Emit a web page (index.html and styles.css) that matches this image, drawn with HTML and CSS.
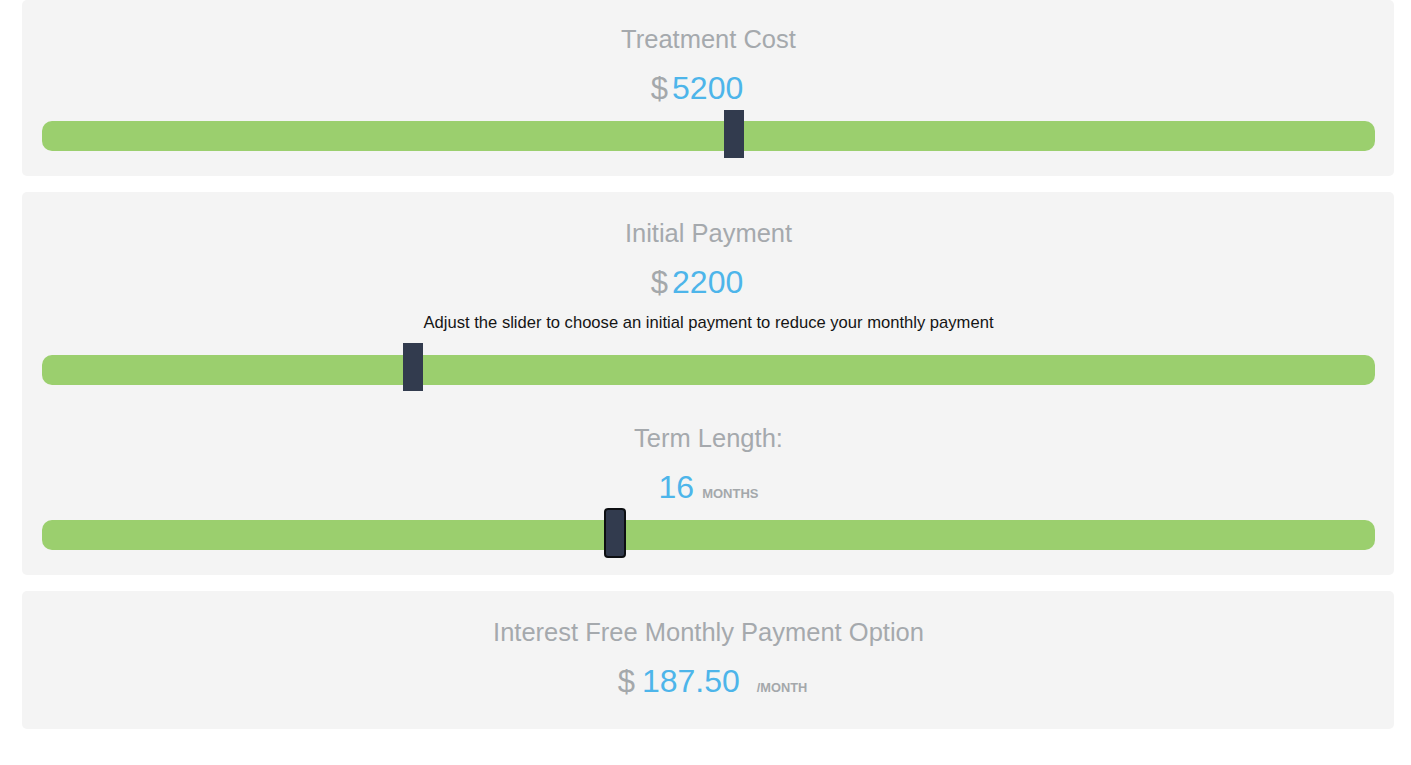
FILE: index.html
```html
<!DOCTYPE html>
<html>
<head>
<meta charset="utf-8">
<link rel="stylesheet" href="styles.css">
</head>
<body>
<div class="wrap">
  <section class="card card-first">
    <h2 class="title">Treatment Cost</h2>
    <div class="value value-dollar"><span class="cur">$</span><span class="num">5200</span></div>
    <div class="slider"><div class="thumb thumb-up" style="left: 51.2%"></div></div>
  </section>

  <section class="card">
    <h2 class="title">Initial Payment</h2>
    <div class="value value-dollar"><span class="cur">$</span><span class="num">2200</span></div>
    <p class="hint">Adjust the slider to choose an initial payment to reduce your monthly payment</p>
    <div class="slider slider-hint"><div class="thumb" style="left: 27.08%"></div></div>

    <h2 class="title title-gap">Term Length:</h2>
    <div class="value"><span class="num">16</span><span class="unit">MONTHS</span></div>
    <div class="slider"><div class="thumb thumb-round" style="left: 42.16%"></div></div>
  </section>

  <section class="card card-last">
    <h2 class="title">Interest Free Monthly Payment Option</h2>
    <div class="value value-month"><span class="cur cur-wide">$</span><span class="num">187.50</span><span class="unit unit-month">/MONTH</span></div>
  </section>
</div>
</body>
</html>
```

FILE: styles.css
```css
html, body {
  margin: 0;
  padding: 0;
  background: #ffffff;
  font-family: "Liberation Sans", Arial, sans-serif;
}

.wrap {
  padding: 0 17px 0 22px;
  display: flex;
  flex-direction: column;
  gap: 16px;
}

.card {
  background: #f4f4f4;
  border-radius: 5px;
  padding: 26px 19px 25px 20px;
  text-align: center;
}

.card-first {
  padding-top: 24px;
}

.card-last {
  padding-bottom: 28px;
}

.title {
  margin: 0;
  font-size: 25.5px;
  font-weight: normal;
  line-height: 30px;
  color: #a5a9ad;
}

.title-gap {
  margin-top: 38px;
}

.value {
  margin-top: 14px;
  height: 40px;
  line-height: 40px;
  display: flex;
  justify-content: center;
  align-items: baseline;
}

.value-dollar {
  padding-right: 23px;
}

.value-month {
  padding-left: 8px;
}

.cur {
  font-size: 31px;
  color: #a4a8ab;
  margin-right: 4px;
}

.cur-wide {
  margin-right: 7px;
}

.num {
  font-size: 32px;
  color: #4db5ea;
}

.unit {
  font-size: 13px;
  font-weight: bold;
  color: #a4a8ab;
  margin-left: 8px;
}

.unit-month {
  font-size: 12.8px;
  margin-left: 17px;
}

.hint {
  margin: 11px 0 0;
  font-size: 16.6px;
  line-height: 20px;
  color: #151515;
}

.slider {
  position: relative;
  margin-top: 13px;
  height: 30px;
  border-radius: 10px;
  background: #9bcf6e;
}

.slider-hint {
  margin-top: 22px;
}

.thumb {
  position: absolute;
  top: -12px;
  width: 20px;
  height: 48px;
  background: #323b4e;
}

.thumb-up {
  top: -11px;
}

.thumb-round {
  top: -12px;
  width: 18px;
  height: 46px;
  border: 2px solid #0d0f12;
  border-radius: 4px;
}
```
